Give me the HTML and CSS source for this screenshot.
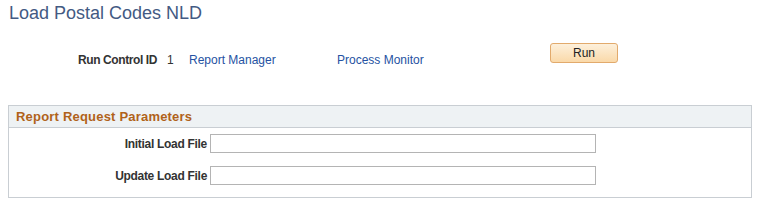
FILE: index.html
```html
<!DOCTYPE html>
<html lang="en">
<head>
  <meta charset="UTF-8" />
  <title>Load Postal Codes NLD</title>
  <link rel="stylesheet" href="styles.css">
</head>
<body>
  <h1 class="page-title">Load Postal Codes NLD</h1>

  <div class="run-row">
    <span class="run-label">Run Control ID</span>
    <span class="run-value">1</span>
    <a href="#" class="run-link report-link">Report Manager</a>
    <a href="#" class="run-link monitor-link">Process Monitor</a>
    <button class="run-btn">Run</button>
  </div>

  <div class="section">
    <div class="section-header">Report Request Parameters</div>
    <div class="section-body">
      <label class="field-label" for="initialFile">Initial Load File</label>
      <input type="text" id="initialFile" class="field-input">
      <label class="field-label" for="updateFile">Update Load File</label>
      <input type="text" id="updateFile" class="field-input">
    </div>
  </div>
</body>
</html>
```

FILE: styles.css
```css
body {
  margin: 0;
  background: #fff;
  font-family: "Liberation Sans", Arial, sans-serif;
  font-size: 12px;
  color: #333;
}

.page-title {
  margin: 0;
  padding: 3px 0 0 9px;
  font-size: 18px;
  font-weight: normal;
  line-height: 21px;
  color: #435a83;
}

.run-row {
  display: flex;
  align-items: flex-start;
  height: 24px;
  margin: 19px 0 0 78px;
}

.run-label,
.run-value,
.run-link {
  margin-top: 10px;
  line-height: 14px;
}

.run-label {
  width: 89px;
  font-weight: bold;
  letter-spacing: -0.4px;
}

.run-value {
  width: 22px;
}

.run-link {
  color: #2552a2;
  text-decoration: none;
}

.report-link {
  width: 148px;
}

.monitor-link {
  width: 213px;
}

.run-btn {
  width: 68px;
  height: 20px;
  padding: 0;
  border: 1px solid #e2aa6c;
  border-radius: 3px;
  background: linear-gradient(#fdf0db, #fad9a9);
  font-family: inherit;
  font-size: 12px;
  color: #222;
}

.section {
  width: 744px;
  box-sizing: border-box;
  margin: 38px 0 0 8px;
  border: 1px solid #c9ced3;
}

.section-header {
  height: 21px;
  padding-left: 7px;
  border-bottom: 1px solid #c9ced3;
  background: #eef2f4;
  font-size: 13px;
  font-weight: bold;
  letter-spacing: 0.2px;
  line-height: 21px;
  color: #b0621a;
}

.section-body {
  display: grid;
  grid-template-columns: 198px 386px;
  column-gap: 3px;
  row-gap: 13px;
  align-items: center;
  padding: 6px 0 12px;
}

.field-label {
  text-align: right;
  font-weight: bold;
  letter-spacing: -0.3px;
}

.field-input {
  width: 386px;
  height: 19px;
  box-sizing: border-box;
  margin: 0;
  border: 1px solid #b4b4b4;
  padding: 0 3px;
  font-family: inherit;
  font-size: 12px;
}
```
